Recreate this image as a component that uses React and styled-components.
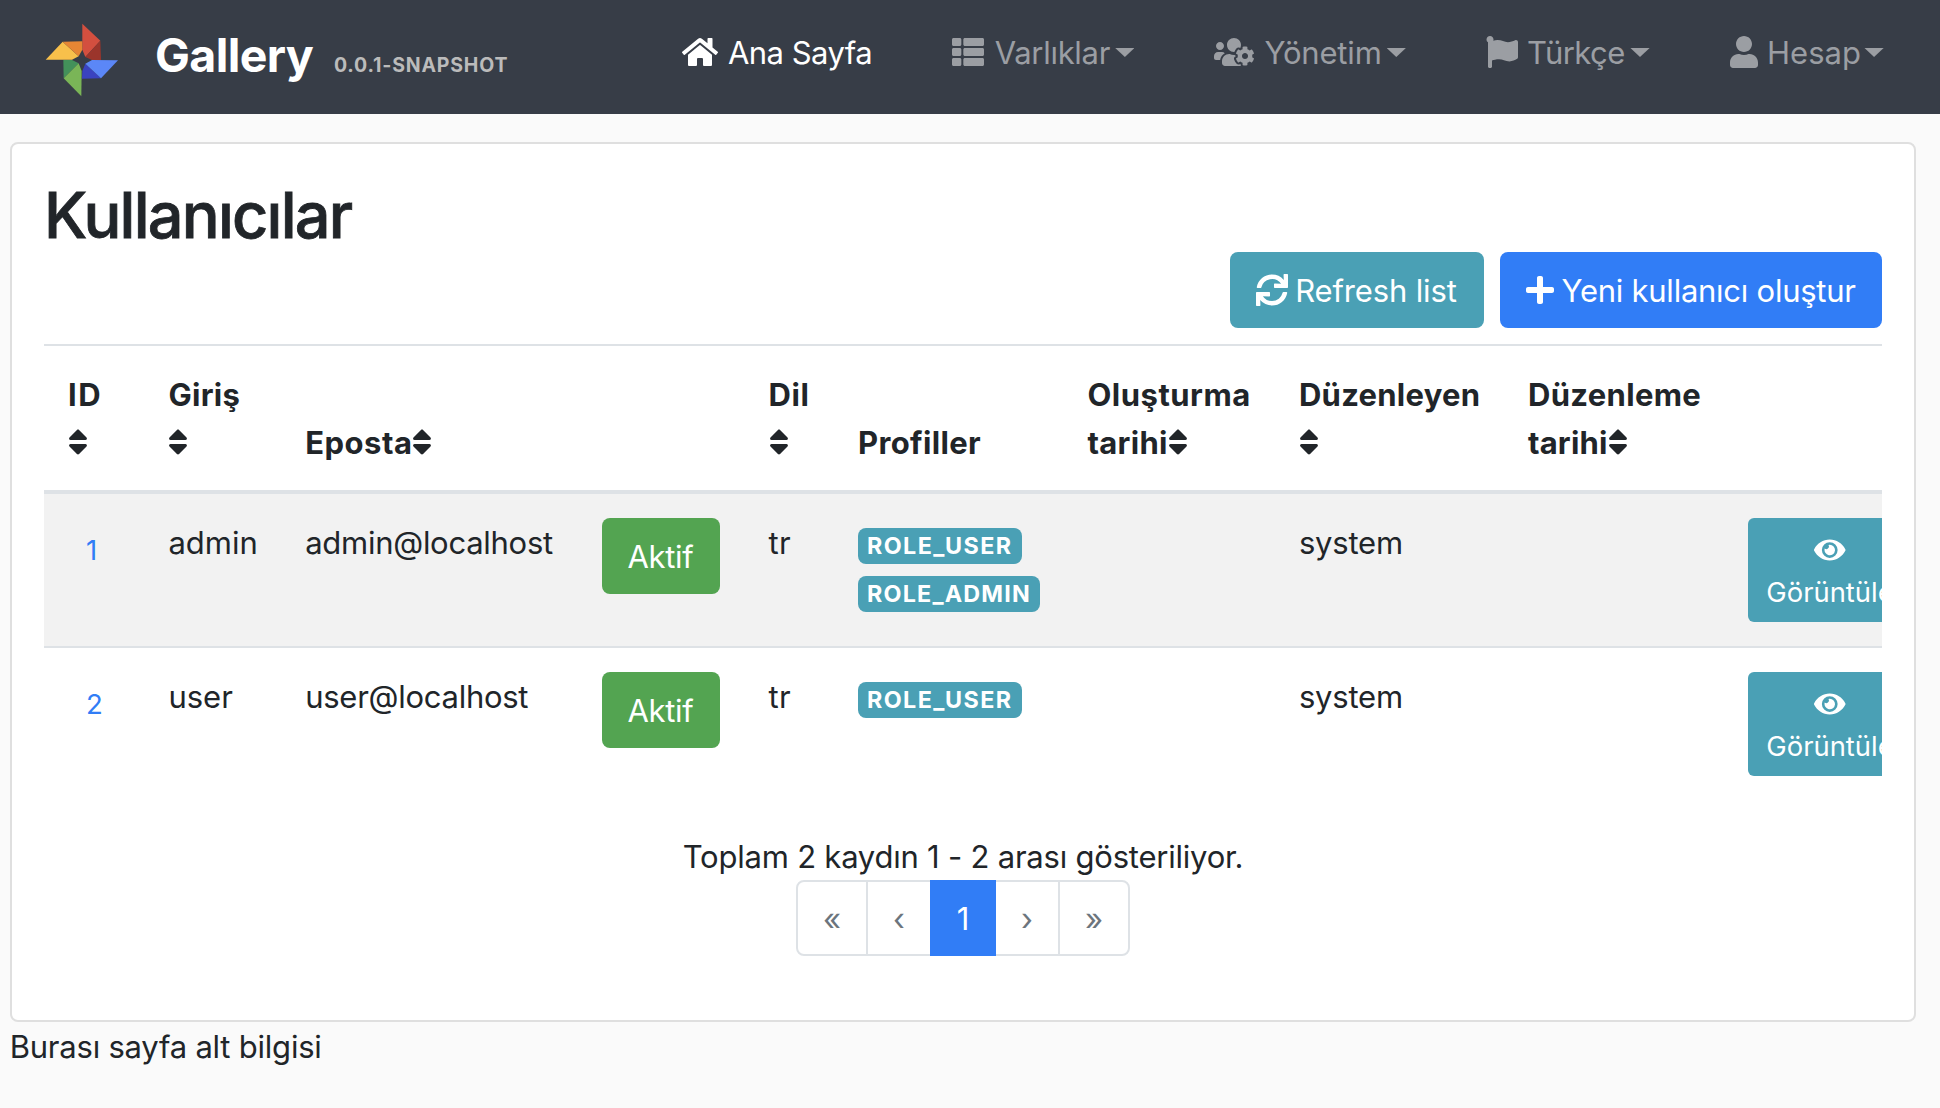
import React from "react";
import styled, { createGlobalStyle } from "styled-components";
import {
  FaHome,
  FaThList,
  FaUsersCog,
  FaFlag,
  FaUser,
  FaSync,
  FaPlus,
  FaSort,
  FaEye,
} from "react-icons/fa";

const colors = {
  text: "#212529",
  dark: "#373d47",
  muted: "#9b9ea3",
  info: "#4aa0b5",
  primary: "#317df6",
  success: "#53a451",
  line: "#dee2e6",
};

const GlobalStyle = createGlobalStyle`
  * { box-sizing: border-box; }
  body {
    margin: 0;
    background: #fafafa;
    color: ${colors.text};
    font-family: Inter, "Liberation Sans", sans-serif;
    font-size: 31px;
    line-height: 48px;
    overflow: hidden;
  }
  svg { display: block; flex: none; }
`;

const Text = styled.span`
  display: inline-block;
  margin: 1px 0 -1px;
  letter-spacing: ${(p) => p.$ls ?? -0.22}px;
  white-space: nowrap;
`;

/* ---------- Navbar ---------- */

const Navbar = styled.header`
  display: flex;
  align-items: flex-start;
  height: 114px;
  background: ${colors.dark};
`;

const Brand = styled.a`
  display: flex;
  flex: 0 0 682px;
  align-items: flex-start;
  padding: 15px 0 0 40px;
  color: #fff;
`;

const BrandText = styled.span`
  display: flex;
  align-items: baseline;
  gap: 20.8px;
  padding: 3px 0 0 31.1px;
  line-height: 72px;
`;

const BrandTitle = styled(Text)`
  font-size: 46.5px;
  font-weight: 700;
`;

const BrandVersion = styled(Text)`
  font-size: 19.5px;
  font-weight: 700;
  color: #bbb;
`;

const Nav = styled.nav`
  display: grid;
  grid-template-columns: 270px 262px 272px 244px auto;
  padding-top: 28px;
`;

const NavItem = styled.a`
  display: flex;
  align-items: center;
  height: 48px;
  color: ${(p) => (p.$active ? "#fff" : colors.muted)};
`;

const NavLabel = styled(Text)`
  margin-left: ${(p) => p.$gap}px;
`;

const Caret = styled.i`
  width: 19.2px;
  height: 9.2px;
  margin: 1px 0 0 ${(p) => p.$gap}px;
  background: currentColor;
  clip-path: polygon(0 0, 100% 0, 50% 100%);
`;

/* ---------- Card ---------- */

const Card = styled.main`
  width: 1906px;
  height: 880px;
  margin: 28px 0 0 10px;
  padding: 32px;
  border: 2px solid #dfdfdf;
  border-radius: 8px;
  background: #fff;
`;

const Heading = styled.h2`
  height: 76px;
  margin: 0;
  font-size: 63px;
  font-weight: 500;
  line-height: 77px;
  -webkit-text-stroke: 0.8px currentColor;
`;

const Toolbar = styled.div`
  display: flex;
  justify-content: flex-end;
  gap: 16px;
  margin-bottom: 16px;
`;

const Button = styled.button`
  display: flex;
  align-items: center;
  width: ${(p) => p.$w}px;
  height: 76px;
  gap: ${(p) => p.$gap ?? 0}px;
  padding: 0 0 0 ${(p) => p.$pad ?? 26}px;
  border: 0;
  border-radius: 8px;
  background: ${(p) => colors[p.$tone]};
  color: #fff;
  font: inherit;
`;

/* ---------- Table ---------- */

const Table = styled.div`
  width: 1838px;
  overflow: hidden;
  margin-bottom: 32px;
`;

const Row = styled.div`
  display: grid;
  grid-template-columns: 100.4px 136.8px 296.8px 166.6px 89.4px 229.5px 211.5px 229px 220px 212px;
  width: max-content;
  height: 154px;
  border-top: 2px solid ${colors.line};
  background: ${(p) => (p.$striped ? "#f2f2f2" : "#fff")};
`;

const HeadRow = styled(Row)`
  height: 150px;
  border-bottom: 4px solid ${colors.line};
  font-weight: 700;
`;

const BodyRow = styled(Row)`
  &:nth-child(2) {
    height: 152px;
    border-top: 0;
  }
`;

const Cell = styled.div`
  padding: 24px 0 0 24px;
`;

const HeadCell = styled(Cell)`
  display: flex;
  flex-direction: column;
  justify-content: flex-end;
  padding: 24px 0 24px 24px;
`;

const HeadLine = styled.div`
  display: flex;
  align-items: center;
  height: 48px;
`;

const SortIcon = styled(FaSort)`
  width: 20px;
  height: 32px;
`;

const IdLink = styled.a`
  display: block;
  padding: 10.5px 18px 0;
  color: ${colors.primary};
  font-size: 27.6px;
  line-height: 42px;
`;

const Badges = styled.div`
  display: flex;
  flex-direction: column;
  gap: 12px;
  padding-top: 10px;
`;

const Badge = styled(Text)`
  width: ${(p) => p.$w}px;
  height: 36px;
  margin: 0;
  padding-left: 9px;
  border-radius: 8px;
  background: ${colors.info};
  color: #fff;
  font-size: 23.3px;
  font-weight: 700;
  line-height: 36px;
`;

const ViewButton = styled.button`
  display: flex;
  flex-direction: column;
  align-items: center;
  width: 164px;
  height: 104px;
  padding: 10px 18px 0;
  border: 0;
  border-radius: 6px;
  background: ${colors.info};
  color: #fff;
  font: inherit;
  font-size: 27.4px;
  line-height: 42px;
`;

const EyeLine = styled.span`
  display: flex;
  align-items: center;
  height: 42px;
  padding-top: 2px;
`;

/* ---------- Pagination ---------- */

const Summary = styled.div`
  height: 48px;
  text-align: center;
`;

const Pagination = styled.div`
  display: flex;
  justify-content: center;
`;

const PageLink = styled.a`
  display: flex;
  align-items: center;
  justify-content: center;
  position: relative;
  z-index: ${(p) => (p.$active ? 1 : 0)};
  width: ${(p) => p.$w}px;
  height: 76px;
  margin-left: -2px;
  border: 2px solid ${(p) => (p.$active ? colors.primary : colors.line)};
  background: ${(p) => (p.$active ? colors.primary : "#fff")};
  color: ${(p) => (p.$active ? "#fff" : "#6c757d")};

  &:first-child {
    margin-left: 0;
    border-radius: 8px 0 0 8px;
  }
  &:last-child {
    border-radius: 0 8px 8px 0;
  }
`;

const Footer = styled.footer`
  padding-left: 9.7px;
`;

const Logo = () => (
  <svg width="84" height="88" viewBox="0 0 252 264">
    <path fill="#d34f3f" d="M127 26 181 77 136 126 127 104Z" />
    <path fill="#9b352b" d="M181 77 183 135 156 135 136 126Z" />
    <path fill="#f8c04b" d="M17 134 68 80 116 124 96 134Z" />
    <path fill="#e68634" d="M68 80 127 79 127 104 116 124Z" />
    <path fill="#43915a" d="M70 135 96 135 116 145 71 190Z" />
    <path fill="#7ab557" d="M116 145 125 168 124 244 71 190Z" />
    <path fill="#3a43c0" d="M127 168 136 146 183 190 126 191Z" />
    <path fill="#5b87f7" d="M136 146 156 135 234 136 183 190Z" />
  </svg>
);

const navItems = [
  { label: "Ana Sayfa", icon: FaHome, width: 36, gap: 10, ls: -0.542, active: true },
  { label: "Varlıklar", icon: FaThList, width: 32, gap: 10.7, ls: -0.29, caret: 5.2 },
  { label: "Yönetim", icon: FaUsersCog, width: 40, gap: 10.4, ls: -0.165, caret: 5 },
  { label: "Türkçe", icon: FaFlag, width: 32, gap: 9, ls: -0.55, caret: 5.7 },
  { label: "Hesap", icon: FaUser, width: 28, gap: 9, ls: 0.02, caret: 3.5 },
];

const columns = [
  { lines: ["ID", ""], ls: 1.6, sortable: true },
  { lines: ["Giriş", ""], ls: 0.32, sortable: true },
  { lines: ["Eposta"], ls: 0.5, sortable: true },
  { lines: [] },
  { lines: ["Dil", ""], ls: 0.6, sortable: true },
  { lines: ["Profiller"], ls: 0.36 },
  { lines: ["Oluşturma", "tarihi"], ls: 0.5, lastLs: 0.3, sortable: true },
  { lines: ["Düzenleyen", ""], ls: 0.26, sortable: true },
  { lines: ["Düzenleme", "tarihi"], ls: 0.32, lastLs: 0.2, sortable: true },
  { lines: [] },
];

const users = [
  {
    id: 1,
    login: "admin",
    email: "admin@localhost",
    roles: [
      { name: "ROLE_USER", width: 164, ls: 1.45 },
      { name: "ROLE_ADMIN", width: 182, ls: 1.21 },
    ],
  },
  {
    id: 2,
    login: "user",
    email: "user@localhost",
    roles: [{ name: "ROLE_USER", width: 164, ls: 1.45 }],
  },
];

const pages = [
  { label: "«", width: 72 },
  { label: "‹", width: 66 },
  { label: "1", width: 66, active: true },
  { label: "›", width: 66 },
  { label: "»", width: 72 },
];

export default function App() {
  return (
    <>
      <GlobalStyle />
      <Navbar>
        <Brand>
          <Logo />
          <BrandText>
            <BrandTitle $ls={-0.627}>Gallery</BrandTitle>
            <BrandVersion $ls={0.812}>0.0.1-SNAPSHOT</BrandVersion>
          </BrandText>
        </Brand>
        <Nav>
          {navItems.map(({ label, icon: Icon, width, gap, ls, caret, active }) => (
            <NavItem key={label} $active={active}>
              <Icon style={{ width, height: 32 }} />
              <NavLabel $gap={gap} $ls={ls}>{label}</NavLabel>
              {caret && <Caret $gap={caret} />}
            </NavItem>
          ))}
        </Nav>
      </Navbar>

      <Card>
        <Heading>
          <Text $ls={-1.77}>Kullanıcılar</Text>
        </Heading>
        <Toolbar>
          <Button $tone="info" $w={254} $gap={7.2}>
            <FaSync size={32} />
            <Text $ls={-0.142}>Refresh list</Text>
          </Button>
          <Button $tone="primary" $w={382} $gap={7.5}>
            <FaPlus style={{ width: 28, height: 32 }} />
            <Text $ls={-0.25}>Yeni kullanıcı oluştur</Text>
          </Button>
        </Toolbar>

        <Table>
          <HeadRow>
            {columns.map(({ lines, ls, lastLs, sortable }, i) => (
              <HeadCell key={i}>
                {lines.map((line, n) => (
                  <HeadLine key={n}>
                    {line && <Text $ls={n > 0 ? lastLs : ls}>{line}</Text>}
                    {sortable && n === lines.length - 1 && <SortIcon />}
                  </HeadLine>
                ))}
              </HeadCell>
            ))}
          </HeadRow>
          {users.map((user) => (
            <BodyRow key={user.id} $striped={user.id === 1}>
              <Cell><IdLink>{user.id}</IdLink></Cell>
              <Cell><Text $ls={0}>{user.login}</Text></Cell>
              <Cell><Text $ls={-0.27}>{user.email}</Text></Cell>
              <Cell>
                <Button $tone="success" $w={118} $pad={25.4}>
                  <Text $ls={-0.313}>Aktif</Text>
                </Button>
              </Cell>
              <Cell><Text $ls={0.4}>tr</Text></Cell>
              <Cell>
                <Badges>
                  {user.roles.map((role) => (
                    <Badge key={role.name} $w={role.width} $ls={role.ls}>{role.name}</Badge>
                  ))}
                </Badges>
              </Cell>
              <Cell />
              <Cell><Text>system</Text></Cell>
              <Cell />
              <Cell>
                <ViewButton>
                  <EyeLine><FaEye style={{ width: 31.5, height: 28 }} /></EyeLine>
                  <Text $ls={0}>Görüntüle</Text>
                </ViewButton>
              </Cell>
            </BodyRow>
          ))}
        </Table>

        <Summary>
          <Text>Toplam 2 kaydın 1 - 2 arası gösteriliyor.</Text>
        </Summary>
        <Pagination>
          {pages.map((page) => (
            <PageLink key={page.label} $w={page.width} $active={page.active}>
              <Text $ls={0}>{page.label}</Text>
            </PageLink>
          ))}
        </Pagination>
      </Card>
      <Footer>
        <Text>Burası sayfa alt bilgisi</Text>
      </Footer>
    </>
  );
}
